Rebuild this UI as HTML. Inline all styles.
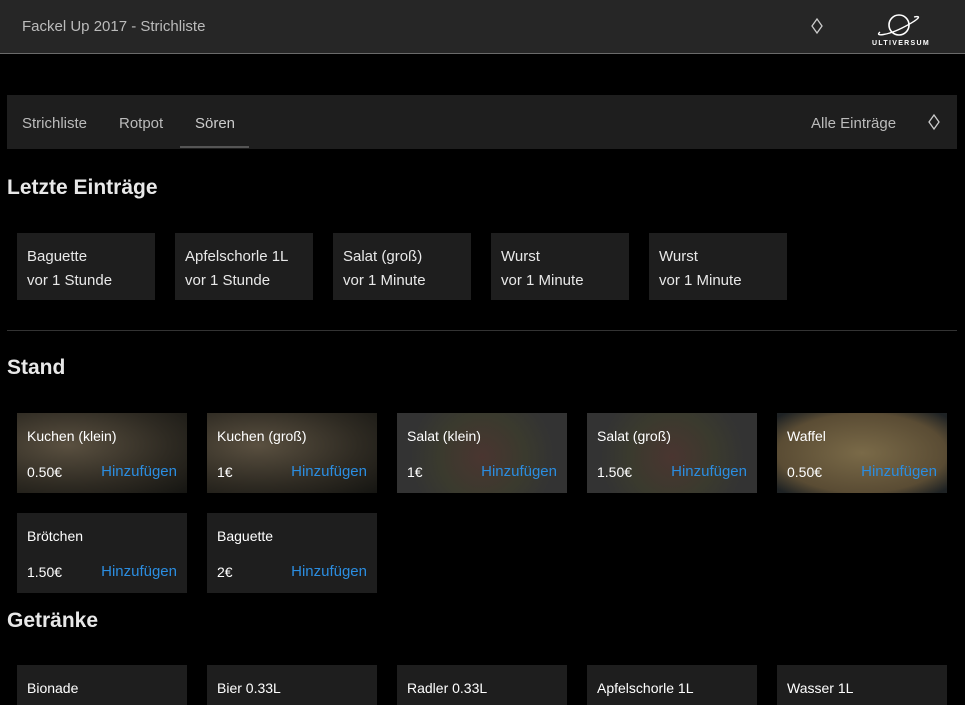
<!DOCTYPE html>
<html><head><meta charset="utf-8"><style>
*{margin:0;padding:0;box-sizing:border-box}
html,body{width:965px;height:705px;overflow:hidden}
body{background:#000;font-family:"Liberation Sans",sans-serif;color:#eee;position:relative}
.a{position:absolute}
.hdr{left:0;top:0;width:965px;height:54px;background:#262626;border-bottom:1px solid #6a6a6a}
.nav{left:7px;top:95px;width:950px;height:54px;background:#1e1e1e}
.nt{font-size:15px;color:#bbb;top:115px}
h2{position:absolute;font-size:21px;font-weight:bold;color:#e8e8e8;left:7px}
.r{position:absolute;background:#1e1e1e;width:138px;height:67px;top:233px;font-size:15px;color:#e8e8e8;padding:12px 10px;line-height:24px}
.c{position:absolute;width:170px;height:80px;background:#1e1e1e;font-size:14px;color:#fff}
.c .n{position:absolute;left:10px;top:15px}
.c .p{position:absolute;left:10px;top:51px}
.c .h{position:absolute;right:10px;top:50px;color:#2b8de0;font-size:15px}
.cake{background:radial-gradient(ellipse at 30% 40%,#5a5040,#2e2a22 60%,#151512)}
.sal{background:radial-gradient(circle at 50% 55%,#4a3530,#3a3a2e 45%,#333 75%)}
.waf{background:radial-gradient(ellipse at 50% 50%,#7a6a48,#5a4c34 70%,#1e2224 95%)}
</style></head><body>
<div class="a hdr"></div>
<div class="a" style="left:22px;top:18px;font-size:15px;color:#bbb">Fackel Up 2017 - Strichliste</div>
<svg class="a" style="left:810px;top:17px" width="14" height="18"><path d="M7 2 L12 9 L7 16 L2 9 Z" fill="none" stroke="#ccc" stroke-width="1.3"/></svg>
<svg class="a" style="left:866px;top:10px" width="70" height="38"><circle cx="33" cy="15" r="10" fill="none" stroke="#fff" stroke-width="1.6"/><path d="M14 22 C8 27 22 25 36 18 C50 11 58 5 48 7" fill="none" stroke="#fff" stroke-width="1.4"/><text x="35" y="35" fill="#fff" font-size="7" font-weight="bold" text-anchor="middle" letter-spacing="1.3" font-family="Liberation Sans">ULTIVERSUM</text></svg>
<div class="a nav"></div>
<div class="a nt" style="left:22px">Strichliste</div>
<div class="a nt" style="left:119px">Rotpot</div>
<div class="a nt" style="left:195px;color:#ccc">Sören</div>
<div class="a" style="left:180px;top:146px;width:69px;height:2px;background:#555"></div>
<div class="a nt" style="left:811px">Alle Einträge</div>
<svg class="a" style="left:927px;top:113px" width="14" height="18"><path d="M7 2 L12 9 L7 16 L2 9 Z" fill="none" stroke="#ccc" stroke-width="1.3"/></svg>
<h2 style="top:176px">Letzte Einträge</h2>
<div class="r" style="left:17px">Baguette<br>vor 1 Stunde</div>
<div class="r" style="left:175px">Apfelschorle 1L<br>vor 1 Stunde</div>
<div class="r" style="left:333px">Salat (groß)<br>vor 1 Minute</div>
<div class="r" style="left:491px">Wurst<br>vor 1 Minute</div>
<div class="r" style="left:649px">Wurst<br>vor 1 Minute</div>
<div class="a" style="left:7px;top:330px;width:950px;height:1px;background:#333"></div>
<h2 style="top:356px">Stand</h2>
<div class="c cake" style="left:17px;top:413px"><span class="n">Kuchen (klein)</span><span class="p">0.50€</span><span class="h">Hinzufügen</span></div>
<div class="c cake" style="left:207px;top:413px"><span class="n">Kuchen (groß)</span><span class="p">1€</span><span class="h">Hinzufügen</span></div>
<div class="c sal" style="left:397px;top:413px"><span class="n">Salat (klein)</span><span class="p">1€</span><span class="h">Hinzufügen</span></div>
<div class="c sal" style="left:587px;top:413px"><span class="n">Salat (groß)</span><span class="p">1.50€</span><span class="h">Hinzufügen</span></div>
<div class="c waf" style="left:777px;top:413px"><span class="n">Waffel</span><span class="p">0.50€</span><span class="h">Hinzufügen</span></div>
<div class="c" style="left:17px;top:513px"><span class="n">Brötchen</span><span class="p">1.50€</span><span class="h">Hinzufügen</span></div>
<div class="c" style="left:207px;top:513px"><span class="n">Baguette</span><span class="p">2€</span><span class="h">Hinzufügen</span></div>
<h2 style="top:609px">Getränke</h2>
<div class="c" style="left:17px;top:665px"><span class="n">Bionade</span></div>
<div class="c" style="left:207px;top:665px"><span class="n">Bier 0.33L</span></div>
<div class="c" style="left:397px;top:665px"><span class="n">Radler 0.33L</span></div>
<div class="c" style="left:587px;top:665px"><span class="n">Apfelschorle 1L</span></div>
<div class="c" style="left:777px;top:665px"><span class="n">Wasser 1L</span></div>
</body></html>
